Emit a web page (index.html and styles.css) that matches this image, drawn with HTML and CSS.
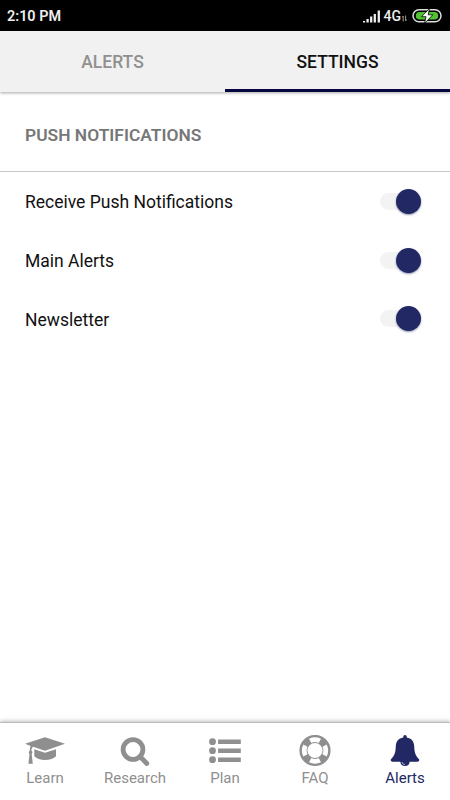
FILE: index.html
```html
<!DOCTYPE html>
<html lang="en">
<head>
  <meta charset="UTF-8">
  <meta name="viewport" content="width=device-width, initial-scale=1.0">
  <title>Alert Settings</title>
  <link rel="stylesheet" href="styles.css">
</head>
<body>
  <div class="status-bar">
    <span class="time">2:10 PM</span>
    <div class="status-icons">
      <svg class="signal" width="18" height="13" viewBox="0 0 18 13">
        <path d="M1 12.6V11M4.6 12.6V9M8.2 12.6V6.5M11.8 12.6V4M15.8 12.6V.5" stroke="#eee" stroke-width="2.3"/>
      </svg>
      <span class="network">4G</span>
      <svg class="data" width="5" height="7" viewBox="0 0 5 7">
        <path d="M1.2 6.5V1L.2 2.5M3.6 .5V6L4.7 4.5" fill="none" stroke="#999" stroke-width="1"/>
      </svg>
      <svg class="battery" width="30" height="16" viewBox="0 0 30 16">
        <rect x="1" y="1.8" width="28" height="12" rx="6" fill="#000" stroke="#ddd" stroke-width="1.5"/>
        <rect x="3.8" y="4" width="22.4" height="7.6" rx="3.8" fill="#51c332"/>
        <path d="M17.5 .5L9.5 8.7H14L12.5 15.5L20.8 6.8H16.2Z" fill="#fff" stroke="#000" stroke-width=".8"/>
      </svg>
    </div>
  </div>

  <div class="tabs">
    <div class="tab">ALERTS</div>
    <div class="tab active">SETTINGS</div>
  </div>

  <main>
    <h2>PUSH NOTIFICATIONS</h2>
    <div class="setting">
      <span>Receive Push Notifications</span>
      <label class="switch"><input type="checkbox" checked><span class="slider"></span></label>
    </div>
    <div class="setting">
      <span>Main Alerts</span>
      <label class="switch"><input type="checkbox" checked><span class="slider"></span></label>
    </div>
    <div class="setting">
      <span>Newsletter</span>
      <label class="switch"><input type="checkbox" checked><span class="slider"></span></label>
    </div>
  </main>

  <nav class="bottom-nav">
    <a class="nav-item">
      <svg width="40" height="32" viewBox="0 0 40 32" fill="currentColor">
        <path d="M20 2.3L40 8.8L20 15.7L8.2 11.8C6.9 12.8 6.4 14 6.4 15.6C7.6 16.4 7.7 18.2 6.7 19.2L7.8 28.8H3.4L4.5 19.2C3.5 18.2 3.6 16.4 4.8 15.6C4.8 13.7 5 12.2 5.7 10.9L0 8.8Z"/>
        <path d="M9.3 14.2L20 17.8L31 14.2V21.3C27 26.2 13.3 26.2 9.3 21.3Z"/>
      </svg>
      <span>Learn</span>
    </a>
    <a class="nav-item">
      <svg width="40" height="32" viewBox="0 0 40 32" fill="none" stroke="currentColor" stroke-width="4.8" stroke-linecap="round">
        <circle cx="18" cy="14.5" r="9.9"/>
        <path d="M25.5 22L31.8 28.5"/>
      </svg>
      <span>Research</span>
    </a>
    <a class="nav-item">
      <svg width="40" height="32" viewBox="0 0 40 32" fill="currentColor">
        <circle cx="7.5" cy="6.7" r="3.4"/>
        <circle cx="7.5" cy="15.7" r="3.4"/>
        <circle cx="7.5" cy="24.7" r="3.4"/>
        <path d="M13.1 4.5H35.8V9H13.1ZM13.1 13.5H35.8V18H13.1ZM13.1 22.5H35.8V27H13.1Z"/>
      </svg>
      <span>Plan</span>
    </a>
    <a class="nav-item">
      <svg width="40" height="32" viewBox="0 0 40 32" fill="none">
        <circle cx="20" cy="15.5" r="11.6" stroke="currentColor" stroke-width="8"/>
        <path d="M14 3.8Q20 .9 26 3.8L23.7 8Q20 6.2 16.3 8ZM14 27.2Q20 30.1 26 27.2L23.7 23Q20 24.8 16.3 23ZM8.3 9.5Q5.4 15.5 8.3 21.5L12.5 19.2Q10.7 15.5 12.5 11.8ZM31.7 9.5Q34.6 15.5 31.7 21.5L27.5 19.2Q29.3 15.5 27.5 11.8Z" fill="#fff"/>
      </svg>
      <span>FAQ</span>
    </a>
    <a class="nav-item active">
      <svg width="40" height="32" viewBox="0 0 40 32" fill="currentColor">
        <path d="M18.3 2.5V1.6Q18.3 0 20 0T21.7 1.6V2.5C26.4 3.3 29 6.5 29.2 11C29.4 16.8 30 20 34 24.2Q35 26.5 32.4 26.7H24.6Q24.4 31.1 20 31.1T15.4 26.7H7.6Q5 26.5 6 24.2C10 20 10.6 16.8 10.8 11C11 6.5 13.6 3.3 18.3 2.5Z"/>
        <path d="M17 27Q17.3 29.6 20 29.6" fill="none" stroke="#fff" stroke-width=".6"/>
      </svg>
      <span>Alerts</span>
    </a>
  </nav>
</body>
</html>
```
FILE: styles.css
```css
* {
  box-sizing: border-box;
}
body {
  margin: 0;
  height: 100vh;
  display: flex;
  flex-direction: column;
  overflow: hidden;
  background-color: #fff;
  color: #111;
  font-family: Roboto, sans-serif;
}

/* Status bar */
.status-bar {
  height: 31px;
  padding: 1px 8px 0 7px;
  display: flex;
  align-items: center;
  justify-content: space-between;
  background-color: #000;
  color: #eee;
}
.time {
  font-size: 14.4px;
  font-weight: 600;
}
.status-icons {
  display: flex;
  align-items: center;
}
.network {
  margin-left: 3px;
  font-size: 14px;
  font-weight: 500;
}
.data {
  margin: 4px 5px 0 1px;
}

/* Tabs */
.tabs {
  height: 61px;
  display: flex;
  background-color: #f1f1f1;
  box-shadow: 0 1px 3px rgba(0, 0, 0, 0.35);
}
.tab {
  flex: 1;
  padding-top: 4px;
  display: flex;
  align-items: center;
  justify-content: center;
  border-bottom: 3px solid transparent;
  color: #909090;
  font-size: 17.5px;
  font-weight: 500;
}
.tab.active {
  color: #111;
  border-bottom-color: #060740;
}

/* Settings list */
main {
  flex: 1;
}
h2 {
  height: 80px;
  margin: 0 0 1px;
  padding: 6px 25px 0;
  display: flex;
  align-items: center;
  border-bottom: 1px solid #c8c8c8;
  color: #777;
  font-size: 17.4px;
  font-weight: 600;
}
.setting {
  height: 58.7px;
  padding: 0 29px 0 25px;
  display: flex;
  align-items: center;
  justify-content: space-between;
  font-size: 17.5px;
}
.switch {
  position: relative;
  width: 41px;
  height: 25px;
  margin-bottom: 2px;
}
.switch input {
  position: absolute;
  opacity: 0;
  margin: 0;
}
.slider {
  display: flex;
  align-items: center;
  justify-content: flex-end;
  height: 25px;
}
.slider:before {
  content: "";
  width: 28px;
  height: 17px;
  margin-right: -12px;
  border-radius: 9px;
  background-color: #f3f3f3;
}
.slider:after {
  content: "";
  position: relative;
  width: 25px;
  height: 25px;
  border-radius: 50%;
  background-color: #212864;
  box-shadow: 0 1px 2px rgba(33, 40, 100, 0.5);
}

/* Bottom navigation */
.bottom-nav {
  height: 78px;
  display: flex;
  border-top: 1px solid #bbb;
  box-shadow: 0 -1px 4px rgba(0, 0, 0, 0.25);
}
.nav-item {
  flex: 1;
  padding-top: 12px;
  display: flex;
  flex-direction: column;
  align-items: center;
  color: #8f8f8f;
  font-size: 15px;
}
.nav-item span {
  margin-top: 2px;
  line-height: 18px;
}
.nav-item.active {
  color: #212864;
}
```
